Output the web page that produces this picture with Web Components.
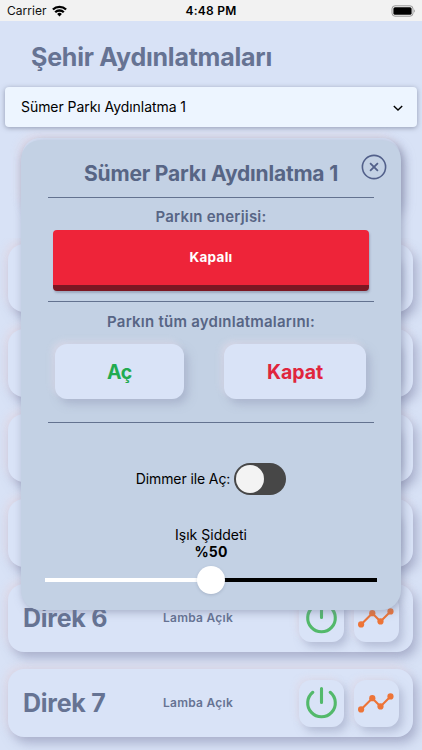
<!DOCTYPE html>
<html lang="tr"><head><meta charset="utf-8"><title>Şehir Aydınlatmaları</title>
<style>
html,body{margin:0;height:750px;overflow:hidden;background:#d8e2f6;font-family:Inter,"Liberation Sans",sans-serif}
</style></head><body>
<city-app></city-app>
<script>
const define = (name, html, setup) => customElements.define(name, class extends HTMLElement {
  connectedCallback() {
    if (this.shadowRoot) return;
    const t = document.createElement('template');
    t.innerHTML = html;
    this.attachShadow({mode: 'open'}).append(t.content.cloneNode(true));
    if (setup) setup(this, this.shadowRoot);
  }
});

/* One line of text whose tracking is set to fill the width given in "w". */
define('fit-text', `<style>:host{display:block;white-space:nowrap;line-height:20px}span{display:inline-block}</style><span><slot></slot></span>`,
  (el, root) => {
    const s = root.querySelector('span'), w = +el.getAttribute('w'), n = el.textContent.length;
    if (!w || !n) return;
    const gap = (w - s.getBoundingClientRect().width) / n;
    s.style.letterSpacing = gap.toFixed(3) + 'px';
  });

define('status-bar', `<style>
:host{display:grid;grid-template-columns:1fr auto 1fr;align-items:center;height:21px;background:#f2f2f2;padding:0 7px;box-sizing:border-box;color:#111}
.l{display:flex;align-items:center;gap:5px;font-size:12px}
.t{font-size:12px;font-weight:600;color:#000}
.r{justify-self:end;display:block;margin-right:-3px}
</style><div class="l"><fit-text w="39.5">Carrier</fit-text>
<svg width="15" height="12" viewBox="0 0 15 12" fill="none" stroke="#000" stroke-width="2.3"><path d="M.9 4.5a9.4 9.4 0 0 1 13.2 0M3.2 7.3a6 6 0 0 1 8.6 0"/><path d="M7.5 11.4 5.1 9a3.4 3.4 0 0 1 4.8 0z" fill="#000" stroke="none"/></svg></div>
<fit-text class="t" w="51">4:48 PM</fit-text>
<svg class="r" width="29" height="14" viewBox="0 0 29 14"><rect x="3" y="1.8" width="21" height="10.4" rx="3" fill="none" stroke="#999"/><rect x="4.4" y="3.2" width="18.2" height="7.6" rx="1.6"/><path d="M25.2 5.2q1.6 1.8 0 3.6z" fill="#888"/></svg>`);

define('park-select', `<style>
:host{display:flex;align-items:center;justify-content:space-between;box-sizing:border-box;height:40px;margin:0 5px;padding:0 13px 0 16px;border-radius:4px;background:#edf5ff;box-shadow:0 1px 5px rgba(90,95,120,.55);font-size:14px;color:#000;position:relative;z-index:1}
</style><fit-text w="165"><slot></slot></fit-text><svg width="12" height="12" viewBox="0 0 12 12" fill="none" stroke="#000" stroke-width="1.4"><path d="m1.8 5 4.2 4 4.2-4"/></svg>`);

define('soft-button', `<style>
:host{display:flex;align-items:center;justify-content:center;background:#d9e3f7;border-radius:12px;box-shadow:4px 5px 9px rgba(148,155,185,.5),-3px -3px 6px rgba(225,219,233,.65)}
</style><slot></slot>`);

define('pole-card', `<style>
:host{display:flex;align-items:center;box-sizing:border-box;height:68px;margin:0 9px 17.2px 8px;padding:0 14.5px 0 15px;border-radius:16px;background:#d9e3f7;color:#667393;box-shadow:4px 6px 11px rgba(148,154,185,.68),-3px -3px 8px rgba(226,218,230,.8)}
.n{font-size:25px;font-weight:700;width:140px}
.s{font-size:12px;font-weight:600}
.b{margin-left:auto;display:flex;gap:9.5px}
soft-button{width:45px;height:47px}
</style><fit-text class="n"></fit-text><fit-text class="s" w="70">Lamba Açık</fit-text>
<div class="b"><soft-button><svg width="33" height="34" viewBox="0 0 33 34" fill="none" stroke="#53b96b" stroke-width="3.1" stroke-linecap="round"><path d="M7.8 6.3a13.8 13.8 0 1 0 17.4 0M16.5 2.5v14"/></svg></soft-button>
<soft-button><svg width="36" height="20" viewBox="0 0 36 20" fill="none" stroke="#ed7437" stroke-width="2.1"><path d="m3.1 16.4 11.2-11.2 8.2 8.2 10-10"/><g fill="#ed7437" stroke="none"><circle cx="3.1" cy="16.4" r="3.1"/><circle cx="14.3" cy="5.2" r="3.1"/><circle cx="22.5" cy="13.4" r="3.1"/><circle cx="32.5" cy="3.4" r="3.1"/></g></svg></soft-button></div>`);

define('park-dialog', `<style>
:host{position:absolute;left:21px;top:140px;width:380px;height:470px;box-sizing:border-box;padding:0 27px;border-radius:20px;background:#c3d1e4;color:#56648a;box-shadow:2px 2px 9px rgba(110,118,148,.5);z-index:2;display:flex;flex-direction:column;align-items:center}
.close{position:absolute;right:14px;top:14px}
.title{font-size:21px;font-weight:700;margin-top:24px;line-height:20px;color:#576585}
hr{border:0;height:1.2px;background:#63728f;width:326px;margin:0;flex:none}
.lab{font-size:15px;font-weight:600;color:#576585}
.power{width:316px;height:61px;box-sizing:border-box;border-bottom:6px solid #7c1723;border-radius:4px;background:#ee2439;color:#fff;display:flex;align-items:center;justify-content:center;font-size:13.5px;font-weight:700;box-shadow:1px 2px 2px rgba(90,95,120,.35)}
.pair{display:flex;justify-content:space-between;width:311px;margin:12px 0 0 -2px}
.pair soft-button{height:55px;font-size:19.5px;font-weight:700}
.pair fit-text{padding:1px 0 0 1px}
.dim{display:flex;align-items:center;gap:4px;color:#000;font-size:14px}
.sw{width:52px;height:32px;border-radius:16px;background:#474747;box-sizing:border-box;padding:2px}
.sw i{display:block;width:28px;height:28px;border-radius:50%;background:#f3f3f3}
.k{color:#000;font-size:14px;line-height:17px}
.range{width:332px;height:28px;display:flex;align-items:center;background:linear-gradient(90deg,#fff 50%,#000 50%) center/100% 4px no-repeat;justify-content:center;border-radius:2px}
.range i{width:28px;height:28px;border-radius:50%;background:#fff;box-shadow:0 1px 3px rgba(80,90,120,.25)}
</style>
<svg class="close" width="26" height="26" viewBox="0 0 26 26" fill="none" stroke="#52608a" stroke-width="1.6"><circle cx="13" cy="13" r="11.6"/><path d="m9.1 9.1 7.8 7.8M16.9 9.1l-7.8 7.8" stroke-width="1.8"/></svg>
<fit-text class="title" w="254">Sümer Parkı Aydınlatma 1</fit-text>
<hr style="margin-top:12.8px">
<fit-text class="lab" style="margin-top:9px" w="111">Parkın enerjisi:</fit-text>
<div class="power" style="margin-top:3px"><fit-text w="43">Kapalı</fit-text></div>
<hr style="margin-top:10px">
<fit-text class="lab" style="margin-top:9.8px" w="208">Parkın tüm aydınlatmalarını:</fit-text>
<div class="pair"><soft-button style="width:129px;color:#22ab50"><fit-text w="25">Aç</fit-text></soft-button><soft-button style="width:142px;color:#e0253d"><fit-text w="56">Kapat</fit-text></soft-button></div>
<hr style="margin-top:22.6px">
<div class="dim" style="margin:40.3px 0 0 0"><fit-text w="94.5">Dimmer ile Aç:</fit-text><div class="sw"><i></i></div></div>
<fit-text class="k" style="margin-top:31px" w="72">Işık Şiddeti</fit-text>
<fit-text class="k" style="font-weight:700" w="33">%50</fit-text>
<div class="range" style="margin-top:5.5px"><i></i></div>`);

define('city-app', `<style>
:host{display:block;position:relative;width:422px;height:750px;overflow:hidden}
h1{margin:26px 0 20px 31px;font-size:25px;font-weight:700;color:#667393;height:20px}
.power-card{height:75px;margin:11px 22px 0 22px;border-radius:18px;background:#d9e3f7;box-shadow:4px 6px 11px rgba(148,154,185,.6),-3px -3px 8px rgba(226,218,230,.8)}
.list{height:512px;margin-top:25px;padding-top:5.5px;overflow:hidden;box-sizing:border-box}
</style><status-bar></status-bar>
<h1><fit-text w="241">Şehir Aydınlatmaları</fit-text></h1>
<park-select>Sümer Parkı Aydınlatma 1</park-select>
<div class="power-card"></div>
<div class="list"></div><park-dialog></park-dialog>`, (el, root) => {
  const list = root.querySelector('.list');
  for (let i = 2; i < 8; i++) {
    const c = document.createElement('pole-card');
    list.append(c);
    const n = c.shadowRoot.querySelector('.n');
    n.textContent = 'Direk ' + i;
    n.shadowRoot.querySelector('span').style.letterSpacing = '-0.25px';
  }
});

/* The select's label arrives through a slot, so it is measured once the page is assembled. */
const app = document.querySelector('city-app').shadowRoot;
const pick = app.querySelector('park-select').shadowRoot.querySelector('fit-text').shadowRoot.querySelector('span');
pick.style.letterSpacing = '0px';
pick.style.letterSpacing = ((165 - pick.getBoundingClientRect().width) / 24).toFixed(3) + 'px';
</script></body></html>
